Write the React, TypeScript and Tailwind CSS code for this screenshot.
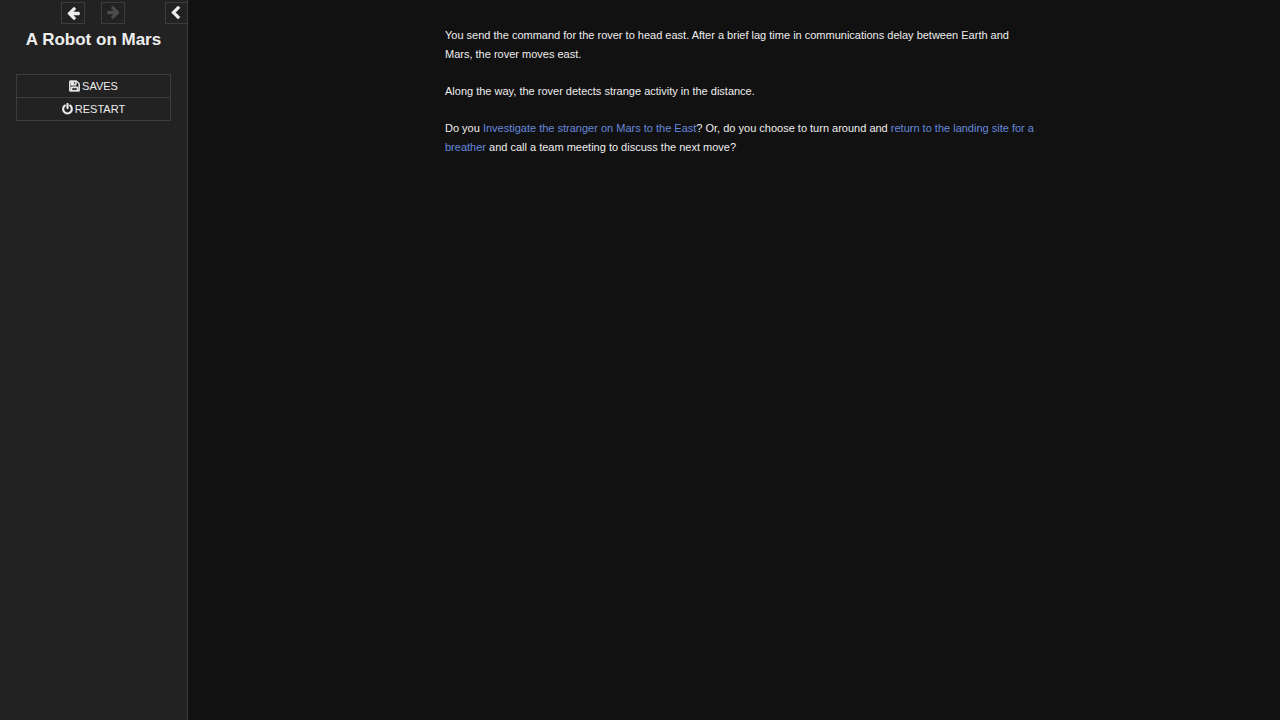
import type { ReactNode } from "react";

const ICONS = {
  arrow:
    "M1536 640v-128q0 -53 -32.5 -90.5t-84.5 -37.5h-704l293 -294q38 -36 38 -90t-38 -90l-75 -76q-37 -37 -90 -37q-52 0 -91 37l-651 652q-37 37 -37 90q0 52 37 91l651 650q38 38 91 38q52 0 90 -38l75 -74q38 -38 38 -91t-38 -91l-293 -293h704q52 0 84.5 -37.5t32.5 -90.5z",
  chevron:
    "M1171 1235l-531 -531l531 -531q19 -19 19 -45t-19 -45l-166 -166q-19 -19 -45 -19t-45 19l-742 742q-19 19 -19 45t19 45l742 742q19 19 45 19t45 -19l166 -166q19 -19 19 -45t-19 -45z",
  floppy:
    "M384 0h768v384h-768v-384zM1280 0h128v896q0 14 -10 38.5t-20 34.5l-281 281q-10 10 -34 20t-39 10v-416q0 -40 -28 -68t-68 -28h-576q-40 0 -68 28t-28 68v416h-128v-1280h128v416q0 40 28 68t68 28h832q40 0 68 -28t28 -68v-416zM896 928v320q0 13 -9.5 22.5t-22.5 9.5h-192q-13 0 -22.5 -9.5t-9.5 -22.5v-320q0 -13 9.5 -22.5t22.5 -9.5h192q13 0 22.5 9.5t9.5 22.5zM1536 896v-928q0 -40 -28 -68t-68 -28h-1344q-40 0 -68 28t-28 68v1344q0 40 28 68t68 28h928q40 0 88 -20t76 -48l280 -280q28 -28 48 -76t20 -88z",
  power:
    "M1536 640q0 -156 -61 -298t-164 -245t-245 -164t-298 -61t-298 61t-245 164t-164 245t-61 298q0 182 80.5 343t226.5 270q43 32 95.5 25t83.5 -50q32 -42 24.5 -94.5t-49.5 -84.5q-98 -74 -151.5 -181t-53.5 -228q0 -104 40.5 -198.5t109.5 -163.5t163.5 -109.5t198.5 -40.5t198.5 40.5t163.5 109.5t109.5 163.5t40.5 198.5q0 121 -53.5 228t-151.5 181q-42 32 -49.5 84.5t24.5 94.5q31 43 84 50t95 -25q146 -109 226.5 -270t80.5 -343zM896 1408v-640q0 -52 -38 -90t-90 -38t-90 38t-38 90v640q0 52 38 90t90 38t90 -38t38 -90z",
};

function Icon({
  name,
  className,
}: {
  name: keyof typeof ICONS;
  className: string;
}) {
  return (
    <svg
      viewBox="-40 -40 1616 1744"
      fill="currentColor"
      stroke="currentColor"
      strokeWidth={name === "floppy" ? 110 : 60}
      className={className}
      aria-hidden="true"
    >
      <path transform="translate(0 1472) scale(1 -1)" d={ICONS[name]} />
    </svg>
  );
}

function StoryLink({ children }: { children: ReactNode }) {
  return (
    <a href="#" className="text-[#6688dd] hover:underline">
      {children}
    </a>
  );
}

function Sidebar() {
  return (
    <aside className="w-[188px] shrink-0 border-r border-[#3c3c3c] bg-[#222]">
      <div className="flex justify-end pt-0.5">
        <div className="flex gap-4 pr-10">
          <button
            aria-label="Go back"
            className="flex h-[22px] w-6 items-center justify-center border border-[#3c3c3c]"
          >
            <Icon name="arrow" className="h-[14px] w-[13px]" />
          </button>
          <button
            aria-label="Go forward"
            disabled
            className="flex h-[22px] w-6 items-center justify-center border border-[#3c3c3c] text-[#4c4c4c]"
          >
            <Icon name="arrow" className="h-[14px] w-[13px] rotate-180" />
          </button>
        </div>
        <button
          aria-label="Toggle the sidebar"
          className="flex h-[22px] w-[22px] items-center justify-center border border-r-0 border-[#3c3c3c]"
        >
          <Icon name="chevron" className="h-[14px] w-[13px]" />
        </button>
      </div>

      <h1 className="mt-1 text-center text-[17px] leading-6 font-bold">
        A Robot on Mars
      </h1>

      <ul className="mx-4 mt-[22px] divide-y divide-[#3c3c3c] border border-[#3c3c3c]">
        <li>
          <button className="flex h-[22px] w-full items-center justify-center gap-0.5">
            <Icon name="floppy" className="h-3 w-[11px]" />
            SAVES
          </button>
        </li>
        <li>
          <button className="flex h-[22px] w-full items-center justify-center gap-0.5">
            <Icon name="power" className="h-3 w-[11px]" />
            RESTART
          </button>
        </li>
      </ul>
    </aside>
  );
}

function App() {
  return (
    <div className="flex min-h-screen bg-[#111] font-['Liberation_Sans',Arial,sans-serif] text-[11px] text-[#eee]">
      <Sidebar />
      <main className="flex-1 pt-[26px] pr-7 pl-10">
        <div className="mx-auto max-w-[590px] space-y-[18px] leading-[19px]">
          <p>
            You send the command for the rover to head east. After a brief lag
            time in communications delay between Earth and Mars, the rover moves
            east.
          </p>
          <p>Along the way, the rover detects strange activity in the distance.</p>
          <p>
            Do you{" "}
            <StoryLink>Investigate the stranger on Mars to the East</StoryLink>?
            Or, do you choose to turn around and{" "}
            <StoryLink>return to the landing site for a breather</StoryLink> and
            call a team meeting to discuss the next move?
          </p>
        </div>
      </main>
    </div>
  );
}

export default App;
